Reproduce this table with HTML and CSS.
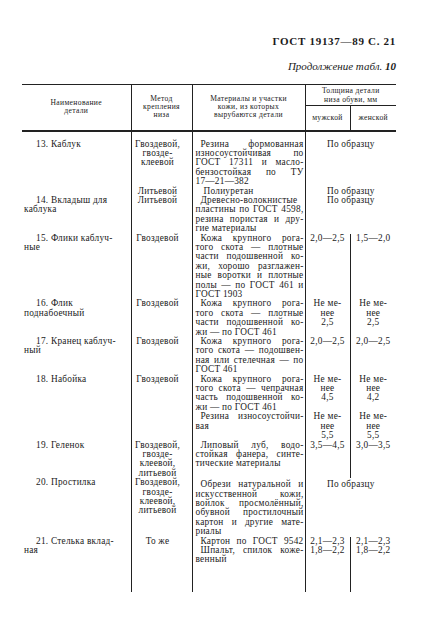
FILE: index.html
```html
<!DOCTYPE html>
<html lang="ru">
<head>
<meta charset="utf-8">
<title>ГОСТ 19137—89 С. 21</title>
<link rel="stylesheet" href="styles.css">
</head>
<body>
<div class="page">
  <div class="runhead">ГОСТ 19137—89 С. 21</div>
  <div class="cont"><i>Продолжение табл.</i> <b>10</b></div>
  <table class="t">
    <colgroup><col class="c1"><col class="c2"><col class="c3"><col class="c4"><col class="c5"></colgroup>
    <thead>
      <tr class="hr1">
        <th rowspan="2" class="h hn">Наименование<br>детали</th>
        <th rowspan="2" class="h hb">Метод<br>крепления<br>низа</th>
        <th rowspan="2" class="h hb">Материалы и участки<br>кожи, из которых<br>вырубаются детали</th>
        <th colspan="2" class="h hb ht">Толщина детали<br>низа обуви, мм</th>
      </tr>
      <tr class="hr2">
        <th class="h hb hs">мужской</th>
        <th class="h hb hs">женской</th>
      </tr>
    </thead>
    <tbody>
      <tr class="first">
        <td rowspan="2" class="n"><div class="f">13. Каблук</div></td>
        <td class="m"><div>Гвоздевой,</div><div>гвозде-</div><div>клеевой</div></td>
        <td class="x"><div class="j i">Резина формованная</div><div class="j">износоустойчивая по</div><div class="j">ГОСТ 17311 и масло-</div><div class="j">бензостойкая по ТУ</div><div>17—21—382</div></td>
        <td colspan="2" class="v"><div>По образцу</div></td>
      </tr>
      <tr>
        <td class="m"><div>Литьевой</div></td>
        <td class="x"><div class="i i2">Полиуретан</div></td>
        <td colspan="2" class="v"><div>По образцу</div></td>
      </tr>
      <tr>
        <td class="n"><div class="f">14. Вкладыш для</div><div>каблука</div></td>
        <td class="m"><div>Литьевой</div></td>
        <td class="x"><div class="j i">Древесно-волокнистые</div><div class="j">пластины по ГОСТ 4598,</div><div class="j">резина пористая и дру-</div><div>гие материалы</div></td>
        <td colspan="2" class="v"><div>По образцу</div></td>
      </tr>
      <tr>
        <td class="n"><div class="f">15. Флики каблуч-</div><div>ные</div></td>
        <td class="m"><div>Гвоздевой</div></td>
        <td class="x"><div class="j i">Кожа крупного рога-</div><div class="j">того скота — плотные</div><div class="j">части подошвенной ко-</div><div class="j">жи, хорошо разглажен-</div><div class="j">ные воротки и плотные</div><div class="j">полы — по ГОСТ 461 и</div><div>ГОСТ 1903</div></td>
        <td class="v"><div>2,0—2,5</div></td>
        <td class="v w"><div>1,5—2,0</div></td>
      </tr>
      <tr>
        <td class="n"><div class="f">16. Флик</div><div>поднабоечный</div></td>
        <td class="m"><div>Гвоздевой</div></td>
        <td class="x"><div class="j i">Кожа крупного рога-</div><div class="j">того скота — плотные</div><div class="j">части подошвенной ко-</div><div>жи — по ГОСТ 461</div></td>
        <td class="v"><div>Не ме-</div><div>нее</div><div>2,5</div></td>
        <td class="v w"><div>Не ме-</div><div>нее</div><div>2,5</div></td>
      </tr>
      <tr>
        <td class="n"><div class="f">17. Кранец каблуч-</div><div>ный</div></td>
        <td class="m"><div>Гвоздевой</div></td>
        <td class="x"><div class="j i">Кожа крупного рога-</div><div class="j">того скота — подошвен-</div><div class="j">ная или стелечная — по</div><div>ГОСТ 461</div></td>
        <td class="v"><div>2,0—2,5</div></td>
        <td class="v w"><div>2,0—2,5</div></td>
      </tr>
      <tr>
        <td class="n"><div class="f">18. Набойка</div></td>
        <td class="m"><div>Гвоздевой</div></td>
        <td class="x"><div class="j i">Кожа крупного рога-</div><div class="j">того скота — чепрачная</div><div class="j">часть подошвенной ко-</div><div>жи — по ГОСТ 461</div></td>
        <td class="v"><div>Не ме-</div><div>нее</div><div>4,5</div></td>
        <td class="v w"><div>Не ме-</div><div>нее</div><div>4,2</div></td>
      </tr>
      <tr>
        <td class="n"></td>
        <td class="m"></td>
        <td class="x"><div class="j i">Резина износоустойчи-</div><div>вая</div></td>
        <td class="v"><div>Не ме-</div><div>нее</div><div>5,5</div></td>
        <td class="v w"><div>Не ме-</div><div>нее</div><div>5,5</div></td>
      </tr>
      <tr>
        <td class="n"><div class="f">19. Геленок</div></td>
        <td class="m"><div>Гвоздевой,</div><div>гвозде-</div><div>клеевой,</div><div>литьевой</div></td>
        <td class="x"><div class="j i">Липовый луб, водо-</div><div class="j">стойкая фанера, синте-</div><div>тические материалы</div></td>
        <td class="v"><div>3,5—4,5</div></td>
        <td class="v w"><div>3,0—3,5</div></td>
      </tr>
      <tr class="r20">
        <td class="n"><div class="f">20. Простилка</div></td>
        <td class="m"><div>Гвоздевой,</div><div>гвозде-</div><div>клеевой,</div><div>литьевой</div></td>
        <td class="x low"><div class="j i">Обрези натуральной и</div><div class="j">искусственной кожи,</div><div class="j">войлок просмолённый,</div><div class="j">обувной простилочный</div><div class="j">картон и другие мате-</div><div>риалы</div></td>
        <td colspan="2" class="v low"><div>По образцу</div></td>
      </tr>
      <tr>
        <td rowspan="3" class="n"><div class="f">21. Стелька вклад-</div><div>ная</div></td>
        <td rowspan="3" class="m"><div>То же</div></td>
        <td class="x"><div class="j i">Картон по ГОСТ 9542</div></td>
        <td class="v"><div>2,1—2,3</div></td>
        <td class="v w"><div>2,1—2,3</div></td>
      </tr>
      <tr>
        <td class="x"><div class="j i">Шпальт, спилок коже-</div><div>венный</div></td>
        <td class="v"><div>1,8—2,2</div></td>
        <td class="v w"><div>1,8—2,2</div></td>
      </tr>
      <tr class="filler">
        <td class="x"></td>
        <td class="v"></td>
        <td class="v w"></td>
      </tr>
    </tbody>
  </table>
</div>
</body>
</html>
```
FILE: styles.css
```css
html, body {
  margin: 0;
  padding: 0;
  background: #ffffff;
}
body {
  font-family: "Liberation Serif", "DejaVu Serif", serif;
  color: #1a1a1a;
}
.page {
  width: 422px;
  height: 636px;
  overflow: hidden;
}
.runhead {
  padding: 35px 26px 0 0;
  text-align: right;
  font-weight: bold;
  font-size: 11px;
  line-height: 12px;
  letter-spacing: 0.7px;
}
.cont {
  padding: 13px 26px 0 0;
  text-align: right;
  font-size: 11px;
  line-height: 12px;
}
.cont i { font-style: italic; }
.cont b { font-style: italic; font-weight: bold; }
.t {
  margin: 12px 0 0 22px;
  border-collapse: collapse;
  table-layout: fixed;
  width: 374px;
}
.c1 { width: 109px; }
.c2 { width: 61px; }
.c3 { width: 113px; }
.c4 { width: 45px; }
.c5 { width: 46px; }

.h {
  font-weight: normal;
  font-size: 7.6px;
  line-height: 8.3px;
  letter-spacing: 0.35px;
  padding: 0;
  text-align: center;
  vertical-align: middle;
  border-top: 1px solid #222;
  border-bottom: 2px solid #222;
}
.hb { border-left: 1px solid #222; }
.hr1 { height: 21px; }
.hr2 { height: 25px; }
.ht { border-bottom: 1px solid #222; padding-top: 1px; }
.hs { border-top: 1px solid #222; }

td {
  padding: 0;
  vertical-align: top;
  font-size: 9.3px;
  line-height: 9.4px;
  letter-spacing: 0.25px;
}
.first td { padding-top: 8px; }
.n { padding-left: 2px; }
.n .f { padding-left: 12px; }
.m {
  text-align: center;
  padding-right: 8px;
  border-left: 1px solid #222;
}
.x {
  padding-left: 3px;
  padding-right: 1px;
  border-left: 1px solid #222;
}
.x .i { padding-left: 5px; }
.x .i2 { padding-left: 8px; }
.j {
  text-align: justify;
  text-align-last: justify;
}
.v {
  text-align: center;
  border-left: 1px solid #222;
}
.r20 .low { padding-top: 2px; }
.filler { height: 27px; }
```
